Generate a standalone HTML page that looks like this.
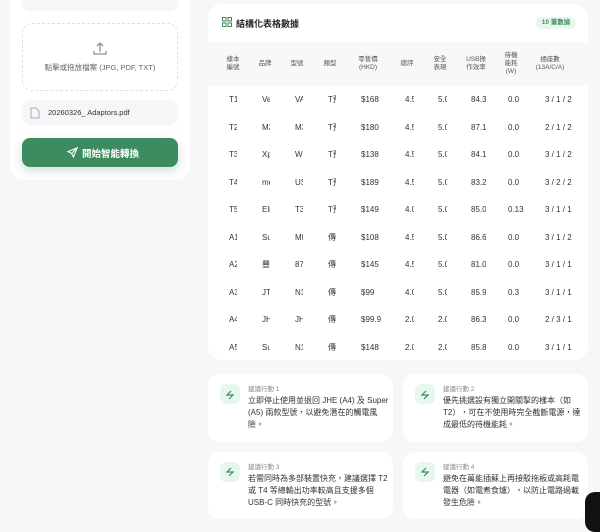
<!DOCTYPE html><html><head><meta charset="utf-8"><style>
*{margin:0;padding:0;box-sizing:border-box}
body{width:600px;height:523px;overflow:hidden;background:#f6f7f9;font-family:"Liberation Sans","Noto Sans CJK TC",sans-serif;position:relative;color:#333}
.a{position:absolute}
.c{position:absolute;white-space:nowrap;overflow:hidden;font-size:8px;color:#333;line-height:10px}
.h{position:absolute;font-size:6.5px;color:#555;line-height:8px;text-align:center;width:40px}
.card{position:absolute;background:#fff;border-radius:12px}
.ic{position:absolute;left:12px;top:10px;width:20px;height:20px;border-radius:6px;background:#e8f7ee}
.lb{position:absolute;left:40px;top:9px;font-size:6.5px;color:#888}
.tx{position:absolute;left:40px;top:21px;font-size:8px;line-height:12px;color:#333;width:142px}
</style></head><body>
<div class="card" style="left:10px;top:-20px;width:180px;height:200px;border-radius:14px"></div>
<div class="a" style="left:22px;top:-10px;width:156px;height:21px;background:#f4f6f8;border-radius:8px"></div>
<div class="a" style="left:22px;top:23px;width:156px;height:68px;border:1px dashed #dde1e6;border-radius:10px"></div>
<svg class="a" style="left:92px;top:41px" width="16" height="16" viewBox="0 0 16 16" fill="none" stroke="#8a94a3" stroke-width="1.3"><path d="M2 10v3h12v-3M8 11V2M5 5l3-3 3 3"/></svg>
<div class="a" style="left:22px;top:62px;width:156px;text-align:center;font-size:7.5px;color:#666">點擊或拖放檔案 (JPG, PDF, TXT)</div>
<div class="a" style="left:22px;top:100px;width:156px;height:25px;background:#f4f6f8;border-radius:8px"></div>
<svg class="a" style="left:30px;top:107px" width="10" height="12" viewBox="0 0 10 12" fill="none" stroke="#aab" stroke-width="1"><path d="M1 1h5l3 3v7H1z"/></svg>
<div class="a" style="left:48px;top:108px;font-size:7.5px;color:#333">20260326_ Adaptors.pdf</div>
<div class="a" style="left:22px;top:138px;width:156px;height:29px;background:#3d8c5f;border-radius:8px;box-shadow:0 4px 10px rgba(61,140,95,.25)"></div>
<svg class="a" style="left:67px;top:147px" width="11" height="11" viewBox="0 0 12 12" fill="none" stroke="#fff" stroke-width="1.2"><path d="M11 1L1 5l4 2 2 4z M5 7l6-6"/></svg>
<div class="a" style="left:82px;top:146px;font-size:9.5px;font-weight:bold;color:#fff">開始智能轉換</div>

<div class="card" style="left:208px;top:4px;width:380px;height:356px;border-radius:14px"></div>
<svg class="a" style="left:222px;top:17px" width="10" height="10" viewBox="0 0 10 10" fill="none" stroke="#3d8c5f" stroke-width="1"><rect x=".5" y=".5" width="3.5" height="3.5"/><rect x="6" y=".5" width="3.5" height="3.5"/><rect x=".5" y="6" width="3.5" height="3.5"/><rect x="6" y="6" width="3.5" height="3.5"/></svg>
<div class="a" style="left:236px;top:17px;font-size:9px;font-weight:bold;color:#222">結構化表格數據</div>
<div class="a" style="left:536px;top:17px;width:40px;height:12px;border-radius:6px;background:#e8f7ee;color:#3d8c5f;font-size:6.5px;font-weight:bold;text-align:center;line-height:12px">10 筆數據</div>
<div class="a" style="left:208px;top:42px;width:380px;height:44px;background:#f7f8fa"></div>
<div class="h" style="left:213px;top:56px">樣本<br>編號</div>
<div class="h" style="left:245px;top:60px">品牌</div>
<div class="h" style="left:277px;top:60px">型號</div>
<div class="h" style="left:310px;top:60px">類型</div>
<div class="h" style="left:348px;top:56px">零售價<br>(HKD)</div>
<div class="h" style="left:387px;top:60px">總評</div>
<div class="h" style="left:420px;top:56px">安全<br>表現</div>
<div class="h" style="left:456px;top:56px">USB操<br>作效率</div>
<div class="h" style="left:491px;top:52px">待機<br>能耗<br>(W)</div>
<div class="h" style="left:530px;top:56px">插座數<br>(13A/C/A)</div>
<div id="t"></div>
<script>
var rows=[["T1","Ve","VA","T預","$168","4.5","5.0","84.3","0.0","3 / 1 / 2"],["T2","M3","M3","T預","$180","4.5","5.0","87.1","0.0","2 / 1 / 2"],["T3","Xp","W","T預","$138","4.5","5.0","84.1","0.0","3 / 1 / 2"],["T4","mo","US","T預","$189","4.5","5.0","83.2","0.0","3 / 2 / 2"],["T5","Eli","T3","T預","$149","4.0","5.0","85.0","0.13","3 / 1 / 1"],["A1","Su","MI","傳","$108","4.5","5.0","86.6","0.0","3 / 1 / 2"],["A2","豐","87","傳","$145","4.5","5.0","81.0","0.0","3 / 1 / 1"],["A3","JT","N1","傳","$99","4.0","5.0","85.9","0.3","3 / 1 / 1"],["A4","JH","JH","傳","$99.9","2.0","2.0","86.3","0.0","2 / 3 / 1"],["A5","Su","N1","傳","$148","2.0","2.0","85.8","0.0","3 / 1 / 1"]];
var L=[229,262,295,328,361,405,438,471,508,545],W=[8,8,8,8,30,8.5,8.5,15,30,40],h="";
rows.forEach(function(r,i){var y=95+i*27.5;r.forEach(function(v,j){h+='<div class="c" style="left:'+L[j]+'px;top:'+y+'px;width:'+W[j]+'px">'+v+'</div>'})});
document.getElementById("t").innerHTML=h;
</script>

<div class="card" style="left:208px;top:374px;width:185px;height:68px"><div class="ic"></div><div class="lb">建議行動 1</div><div class="tx">立即停止使用並退回 JHE (A4) 及 Super (A5) 兩款型號，以避免潛在的觸電風險。</div></div>
<div class="card" style="left:403px;top:374px;width:185px;height:68px"><div class="ic"></div><div class="lb">建議行動 2</div><div class="tx">優先挑選設有獨立開關掣的樣本（如 T2），可在不使用時完全截斷電源，達成最低的待機能耗。</div></div>
<div class="card" style="left:208px;top:452px;width:185px;height:67px"><div class="ic"></div><div class="lb">建議行動 3</div><div class="tx">若需同時為多部裝置快充，建議選擇 T2 或 T4 等總輸出功率較高且支援多個 USB-C 同時快充的型號。</div></div>
<div class="card" style="left:403px;top:452px;width:185px;height:67px"><div class="ic"></div><div class="lb">建議行動 4</div><div class="tx">避免在萬能插蘇上再接駁拖板或高耗電電器（如電煮食爐），以防止電路過載發生危險。</div></div>
<svg class="a" style="left:226px;top:390px" width="8" height="10" viewBox="0 0 8 10" fill="none" stroke="#3d8c5f" stroke-width="1.2"><path d="M5 1L1 5h6L3 9"/></svg>
<svg class="a" style="left:421px;top:390px" width="8" height="10" viewBox="0 0 8 10" fill="none" stroke="#3d8c5f" stroke-width="1.2"><path d="M5 1L1 5h6L3 9"/></svg>
<svg class="a" style="left:226px;top:467px" width="8" height="10" viewBox="0 0 8 10" fill="none" stroke="#3d8c5f" stroke-width="1.2"><path d="M5 1L1 5h6L3 9"/></svg>
<svg class="a" style="left:421px;top:467px" width="8" height="10" viewBox="0 0 8 10" fill="none" stroke="#3d8c5f" stroke-width="1.2"><path d="M5 1L1 5h6L3 9"/></svg>
<div class="a" style="left:585px;top:492px;width:30px;height:40px;background:#111;border-radius:10px"></div>
</body></html>
